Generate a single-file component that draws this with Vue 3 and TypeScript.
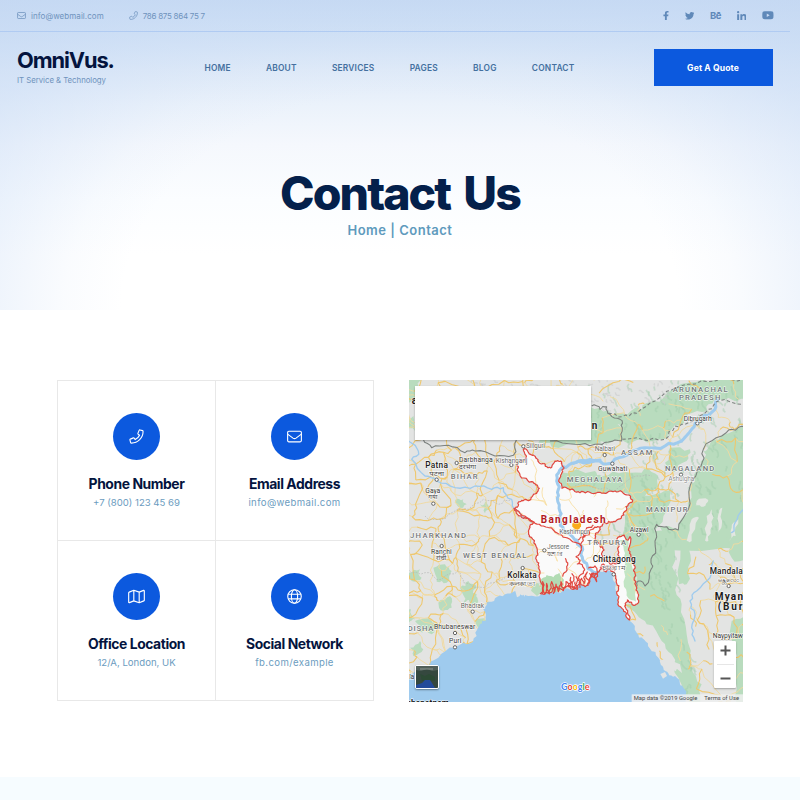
<script setup lang="ts">
type Pt = [number, number]

interface Label {
  t: string
  x: number
  y: number
  w: number
  c: string
}

const navItems = ['Home', 'About', 'Services', 'Pages', 'Blog', 'Contact']

const cards = [
  { icon: 'phone', title: 'Phone Number', text: '+7 (800) 123 45 69', link: false },
  { icon: 'mail', title: 'Email Address', text: 'info@webmail.com', link: true },
  { icon: 'map', title: 'Office Location', text: '12/A, London, UK', link: false },
  { icon: 'globe', title: 'Social Network', text: 'fb.com/example', link: true },
]

// Seeded generator, so the map lines are the same on every load
let seed = 20197
function rnd(): number {
  seed = (seed * 1664525 + 1013904223) % 4294967296
  return seed / 4294967296
}

function parse(s: string, dx = 0, dy = 0): Pt[] {
  return s.trim().split(/\s+/).map((p) => {
    const [x, y] = p.split(',').map(Number)
    return [x + dx, y + dy] as Pt
  })
}

// Midpoint displacement: turns a coarse outline into a natural looking one
function rough(pts: Pt[], amp: number, close = false, depth = 2): string {
  let line = close ? [...pts, pts[0]] : pts
  for (let d = 0; d < depth; d++) {
    const next: Pt[] = [line[0]]
    for (let i = 1; i < line.length; i++) {
      const [ax, ay] = line[i - 1]
      const [bx, by] = line[i]
      const len = Math.hypot(bx - ax, by - ay)
      const k = Math.min(len * 0.3, amp) * (rnd() - 0.5) * 2
      next.push([(ax + bx) / 2 - ((by - ay) / (len || 1)) * k, (ay + by) / 2 + ((bx - ax) / (len || 1)) * k])
      next.push(line[i])
    }
    line = next
  }
  return 'M' + line.map((p) => p[0].toFixed(1) + ' ' + p[1].toFixed(1)).join('L') + (close ? 'Z' : '')
}

const NW: Pt = [-12, -12]
const NE: Pt = [498, -12]
const SW: Pt = [-12, 483]
const SE: Pt = [498, 483]
const BD: Pt = [273, 180]
const at = (s: string, o: Pt) => parse(s, o[0], o[1])

const sea = rough(parse('-20,925 8,883 35,868 63,853 88,833 138,803 173,793 203,768 213,733 231,723 223,688 233,668 258,655 288,643 318,633 333,643 358,648 398,640 423,632 463,630 503,618 535,600 548,580 573,575 603,570 612,600 625,650 645,690 663,723 683,758 705,778 722,805 748,833 763,863 778,880 798,888 812,905 823,923 828,975 -20,975'), 6, true)

const greens = [
  at('100,118 140,112 200,100 235,75 290,42 330,22 400,18 520,5 520,70 440,72 400,85 380,108 330,125 290,160 270,188 200,190 145,195 142,160', NE),
  at('-10,60 45,92 100,103 140,155 140,195 60,205 -10,205 -110,200', NE),
  at('520,150 440,178 400,215 385,225 378,270 345,330 340,400 310,460 250,445 240,520 520,520', NE),
  at('-50,288 60,285 80,300 150,288 210,275 250,300 240,340 210,370 175,372 150,350 0,345 -60,340', NE),
  at('175,370 240,355 290,330 280,390 250,450 240,520 130,520 150,440', NE),
  at('285,215 345,220 335,255 290,290 270,260', NE),
  at('130,-20 300,-20 300,60 305,130 320,190 335,280 350,380 380,430 388,500 345,500 310,410 290,340 260,300 215,250 185,220 150,190 180,195 185,130 160,60', SE),
  at('305,-20 345,-10 348,60 335,130 312,130', SE),
  at('455,-20 520,-20 520,60 470,50', SE),
  at('470,240 520,220 520,500 490,500 480,380', SE),
  at('-10,-10 50,5 40,30 60,40 20,75 -10,80', NW),
  at('-5,125 25,120 30,165 -5,160', NW),
  at('400,190 520,190 520,208 440,212', NW),
  at('85,80 120,70 140,90 125,125 95,122', SW),
  at('165,140 190,120 215,140 200,180 175,185', SW),
  at('100,185 135,165 140,200 115,210', SW),
  at('30,240 70,232 100,250 80,280 40,270', SW),
  at('185,165 215,160 220,180 195,185', SW),
  at('215,235 243,238 235,255 220,260', SW),
  at('15,320 45,300 55,325 25,345', SW),
  at('10,95 45,85 50,110 20,120', SW),
  at('225,385 245,375 262,398 240,412', NW),
  at('0,215 18,205 30,235 12,245', SW),
  at('150,375 175,370 185,385 160,392', NW),
].map((p) => rough(p, 9, true))

// Bare valleys inside the eastern forest
const clearings = [
  at('365,375 400,372 385,392 362,388', NE),
  at('350,430 372,425 350,495 335,495', NE),
  at('470,455 490,430 482,480 462,495', NE),
  at('395,420 410,400 412,450 400,495 390,495', NE),
  at('430,415 442,395 440,450 430,470', NE),
].map((p) => rough(p, 6, true))

const hills: string[] = []
for (let i = 0; i < 420; i++) {
  const x = 520 + rnd() * 482
  const y = rnd() * 940
  const low = y > 470
  if (low && (x < 690 + (y - 500) * 0.35 || x > 800 + (y - 500) * 0.15)) continue
  if (!low && x < 700 && y > 200 && y < 270) continue
  const l = 8 + rnd() * 22
  hills.push(rough([[x, y], [x + l * (rnd() - 0.2), y + l]], 8))
}
const snow: string[] = []
for (let i = 0; i < 90; i++) {
  const x = 180 + rnd() * 600
  const y = rnd() * (x > 640 ? 65 : 85)
  snow.push(rough([[x, y], [x + 18 * rnd(), y + 12 * rnd()]], 6))
}

// Web of roads on a jittered grid, thinner over the eastern hills
function density(x: number, y: number): number {
  if (x > 880 && y > 480) return 0.55
  if (x > 820 && y > 480) return 0.4
  if (x > 660 && y > 400) return 0.07
  if (x > 800 && y > 200) return 0.14
  if (x > 520 && y < 110) return 0.1
  if (x > 520 && y < 420) return 0.62
  return 0.82
}
const minor: string[] = []
const major: string[] = []
const step = 43
const nodes: Pt[][] = []
for (let r = 0; r < 25; r++) {
  nodes.push([])
  for (let q = 0; q < 26; q++) nodes[r].push([q * step - 20 + (rnd() - 0.5) * 44, r * step - 20 + (rnd() - 0.5) * 44])
}
for (let r = 0; r < 24; r++) {
  for (let q = 0; q < 25; q++) {
    const a = nodes[r][q]
    const d = density(a[0], a[1])
    for (const b of [nodes[r][q + 1], nodes[r + 1][q]]) {
      if (rnd() < d) (rnd() < 0.6 ? major : minor).push(rough([a, b], 8))
    }
    if (rnd() < d * 0.4) minor.push(rough([a, nodes[r + 1][q + 1]], 8))
  }
}
const inner = [...minor, ...major].filter((_, n) => n % 3 === 0)

const country = rough(at('70,28 95,45 110,55 125,72 140,80 155,82 172,62 186,72 186,90 182,110 186,145 210,150 250,155 300,157 345,153 385,165 398,180 378,200 372,225 345,245 325,245 300,262 287,280 285,295 300,318 312,330 308,348 330,372 348,372 358,350 352,300 358,288 372,285 382,300 390,290 390,335 400,370 405,400 408,450 411,492 400,496 382,480 374,498 388,540 366,505 352,465 350,430 345,400 330,388 318,396 305,385 292,400 275,400 268,425 255,440 240,425 225,445 205,435 190,452 170,440 150,458 125,462 120,400 110,360 112,330 88,290 90,262 100,250 70,235 42,205 60,185 85,182 110,160 118,145 95,125 55,95 50,75 75,60', BD), 5, true, 3)
const hillTracts = rough(at('360,300 385,300 390,340 405,400 408,485 385,475 372,440 372,380 375,340', BD), 4, true)
const mangrove = rough(at('122,420 140,405 160,412 178,398 192,420 190,448 150,458 124,460', BD), 4, true)
const redLines = [
  rough(at('42,205 60,220 90,238 105,250 130,258 160,270 185,285 210,298 245,320', BD), 4),
  rough(at('245,320 248,295 262,285 270,270 290,262 300,262', BD), 6),
  rough(at('235,300 255,290 250,275 275,262 280,255', BD), 6),
  rough(at('245,320 240,340 228,350 240,360 232,372 248,380 250,400 238,420', BD), 7),
  rough(at('120,462 128,425 135,462 140,430 148,462 155,425 160,460 168,432 175,455 183,425 190,452', BD), 5),
  rough(at('190,452 198,425 205,440 212,412 222,446 228,410 240,442 245,415 252,432 262,396 266,432 276,402 290,425 292,402', BD), 7),
  rough(at('196,355 203,375 198,395 188,410', BD), 4),
  rough(at('215,400 222,420 210,440 232,448 225,425', BD), 5),
  rough(at('265,385 285,378 292,395 280,412 268,400', BD), 5),
  rough(at('300,385 310,372 322,388 335,378 345,392', BD), 6),
]
const rivers = [
  { d: rough(at('-10,170 40,225 20,250 60,300 95,315 150,335 210,330 260,340 295,335 320,370 325,395 350,420 380,438', NW), 6), w: 4 },
  { d: rough(at('-5,262 60,255 110,262 160,235 210,215 270,210 320,195 350,160 380,130 420,100 430,70', NE), 6), w: 9 },
  { d: rough(at('300,60 260,62 215,70 190,80 170,105 178,140 172,175 180,215 178,240 190,270 225,300 245,320', BD), 4), w: 9 },
  { d: rough(at('230,300 246,320 247,352 262,378 285,398 300,402', BD), 4), w: 9 },
  { d: rough(at('415,60 405,110 365,150 345,180 360,220 350,260 360,300', SE), 7), w: 4 },
  { d: rough(at('505,400 480,440 470,470', NE), 6), w: 4 },
]
const borders = [
  rough(at('55,190 80,215 130,208 180,230 210,225 270,240 325,238 335,190', NW), 6),
  rough(at('50,90 75,100 95,92 105,115 135,130 142,155 140,195 100,198 60,205 0,205 -75,195', NE), 6),
  rough(at('510,152 470,160 440,180 385,220 378,270 345,330 340,400 310,462 275,452 245,445 240,495 242,520 228,560 228,580 210,630 190,615 185,632', NE), 6),
]
const dashed = [
  rough(at('100,112 140,122 185,112 240,75 290,42 340,25 420,15 510,8', NE), 6),
  rough(at('142,190 200,190 270,190 300,150 340,140 400,100 430,75 505,85', NE), 6),
]
const stateLines = [
  rough(at('60,420 110,430 150,405 190,400 235,370 280,385 320,370', NW), 7),
  rough(at('10,85 60,95 110,115 160,90 175,125 240,140 300,110', SW), 7),
  rough(at('0,330 60,335 120,345 170,305 230,300', NE), 7),
]

const labels: Label[] = [
  { t: 'a', x: 8, y: 72, w: 14, c: 'nation' },
  { t: 'n', x: 548, y: 148, w: 17, c: 'nation' },
  { t: 'Patna', x: 49, y: 264, w: 68, c: 'city' },
  { t: 'पटना', x: 61, y: 287, w: 44, c: 'local' },
  { t: 'Darbhanga', x: 150, y: 247, w: 101, c: 'town' },
  { t: 'दरभंगा', x: 150, y: 266, w: 51, c: 'local' },
  { t: 'Kishanganj', x: 260, y: 248, w: 95, c: 'town faint' },
  { t: 'Siliguri', x: 351, y: 205, w: 57, c: 'town faint' },
  { t: 'BIHAR', x: 125, y: 296, w: 81, c: 'state' },
  { t: 'Gaya', x: 49, y: 338, w: 45, c: 'town' },
  { t: 'गया', x: 58, y: 358, w: 27, c: 'local' },
  { t: 'JHARKHAND', x: 3, y: 473, w: 168, c: 'state' },
  { t: 'ARUNACHAL', x: 791, y: 36, w: 165, c: 'state' },
  { t: 'PRADESH', x: 810, y: 59, w: 124, c: 'state' },
  { t: 'Dibrugarh', x: 824, y: 122, w: 84, c: 'town' },
  { t: 'Nalbari', x: 557, y: 212, w: 61, c: 'town faint' },
  { t: 'ASSAM', x: 636, y: 226, w: 94, c: 'state' },
  { t: 'Guwahati', x: 567, y: 274, w: 88, c: 'town' },
  { t: 'NAGALAND', x: 768, y: 272, w: 148, c: 'state' },
  { t: 'Ashuigha', x: 778, y: 304, w: 78, c: 'town pale' },
  { t: 'MEGHALAYA', x: 473, y: 307, w: 167, c: 'state' },
  { t: 'MANIPUR', x: 711, y: 395, w: 125, c: 'state' },
  { t: 'Aizawl', x: 662, y: 455, w: 57, c: 'town' },
  { t: 'Kashimpur', x: 451, y: 463, w: 90, c: 'town faint' },
  { t: 'Bangladesh', x: 395, y: 430, w: 195, c: 'focus' },
  { t: 'TRIPURA', x: 535, y: 496, w: 116, c: 'state' },
  { t: 'Jessore', x: 414, y: 508, w: 66, c: 'town faint' },
  { t: 'যশোর', x: 414, y: 528, w: 45, c: 'local' },
  { t: 'Chittagong', x: 551, y: 546, w: 129, c: 'city' },
  { t: 'চট্টগ্রাম', x: 578, y: 569, w: 71, c: 'local' },
  { t: 'Kolkata', x: 295, y: 593, w: 88, c: 'city' },
  { t: 'কলকাতা', x: 300, y: 617, w: 81, c: 'local' },
  { t: 'Ranchi', x: 66, y: 522, w: 62, c: 'town' },
  { t: 'रांची', x: 81, y: 541, w: 31, c: 'local' },
  { t: 'WEST BENGAL', x: 162, y: 533, w: 190, c: 'state' },
  { t: 'Bhadrak', x: 155, y: 685, w: 71, c: 'town faint' },
  { t: 'DISHA', x: -4, y: 753, w: 77, c: 'state' },
  { t: 'Bhubaneswar', x: 75, y: 748, w: 124, c: 'town' },
  { t: 'Puri', x: 120, y: 790, w: 37, c: 'town' },
  { t: 'la', x: 1, y: 897, w: 15, c: 'town' },
  { t: 'khapatnam', x: -8, y: 978, w: 128, c: 'city heavy' },
  { t: 'Mandala', x: 902, y: 581, w: 99, c: 'city' },
  { t: 'မန္တလေး', x: 926, y: 605, w: 66, c: 'local' },
  { t: 'Myan', x: 917, y: 660, w: 85, c: 'nation' },
  { t: '(Bur', x: 926, y: 690, w: 74, c: 'nation' },
  { t: 'Naypyitaw', x: 911, y: 774, w: 91, c: 'town' },
]

const markers = parse('83,299 143,249 307,255 343,199 73,371 865,130 587,225 610,251 816,284 689,464 406,511 614,583 341,564 98,498 191,695 138,759 138,802 959,618')
</script>

<template>
  <div class="page">
    <header class="hero">
      <div class="topbar">
        <div class="contacts">
          <span class="contact">
            <svg class="tiny" viewBox="0 0 24 24"><rect x="1.500" y="4" width="21" height="16" rx="2" /><path d="M1.500 8.500l8.300 6.200q2.200 1.500 4.400 0l8.300-6.200" /></svg>
            <span class="mailtext">info@webmail.com</span>
          </span>
          <span class="contact">
            <svg class="tiny" viewBox="0 0 24 24"><path d="M17.500 1.500L21.800 2.600Q22.500 2.800 22.500 4C22.500 14.200 14.200 22.500 4 22.500Q2.800 22.500 2.600 21.800L1.500 17.500Q1.300 16.600 2.200 16.200L7 14.200Q7.700 13.900 8.300 14.600L10 16.900C13 15.500 15.500 13 16.900 10L14.600 8.300Q13.900 7.700 14.200 7L16.200 2.200Q16.600 1.300 17.500 1.500Z" /></svg>
            <span class="phonetext">786 875 864 75 7</span>
          </span>
        </div>
        <div class="social">
          <svg viewBox="0 0 320 512"><path d="M279.140 288l14.220-92.660h-88.910v-60.130c0-25.350 12.420-50.060 52.240-50.060h40.420V6.260S260.430 0 225.360 0c-73.220 0-121.080 44.380-121.080 124.720v70.620H22.890V288h81.390v224h100.170V288z" /></svg>
          <svg viewBox="0 0 512 512"><path d="M459.370 151.716c.325 4.548.325 9.097.325 13.645 0 138.720-105.583 298.558-298.558 298.558-59.452 0-114.680-17.219-161.137-47.106 8.447.974 16.568 1.299 25.340 1.299 49.055 0 94.213-16.568 130.274-44.832-46.132-.975-84.792-31.188-98.112-72.772 6.498.974 12.995 1.624 19.818 1.624 9.421 0 18.843-1.300 27.614-3.573-48.081-9.747-84.143-51.980-84.143-102.985v-1.299c13.969 7.797 30.214 12.670 47.431 13.319-28.264-18.843-46.781-51.005-46.781-87.391 0-19.492 5.197-37.360 14.294-52.954 51.655 63.675 129.300 105.258 216.365 109.807-1.624-7.797-2.599-15.918-2.599-24.040 0-57.828 46.782-104.934 104.934-104.934 30.213 0 57.502 12.670 76.670 33.137 23.715-4.548 46.456-13.320 66.599-25.340-7.798 24.366-24.366 44.833-46.132 57.827 21.117-2.273 41.584-8.122 60.426-16.243-14.292 20.791-32.161 39.308-52.628 54.253z" /></svg>
          <span class="behance">Bē</span>
          <svg viewBox="0 0 448 448"><path d="M100.280 448H7.400V148.900h92.880zM53.790 108.100C24.090 108.100 0 83.500 0 53.800a53.790 53.790 0 0 1 107.580 0c0 29.700-24.100 54.300-53.790 54.300zM447.900 448h-92.680V302.400c0-34.700-.7-79.200-48.290-79.200-48.290 0-55.690 37.700-55.690 76.700V448h-92.780V148.900h89.080v40.800h1.300c12.400-23.500 42.690-48.300 87.880-48.300 94 0 111.280 61.900 111.280 142.300V448z" /></svg>
          <svg class="youtube" viewBox="0 0 576 512"><path d="M549.655 124.083c-6.281-23.650-24.787-42.276-48.284-48.597C458.781 64 288 64 288 64S117.220 64 74.629 75.486c-23.497 6.322-42.003 24.947-48.284 48.597-11.412 42.867-11.412 132.305-11.412 132.305s0 89.438 11.412 132.305c6.281 23.650 24.787 41.500 48.284 47.821C117.220 448 288 448 288 448s170.780 0 213.371-11.486c23.497-6.321 42.003-24.171 48.284-47.821 11.412-42.867 11.412-132.305 11.412-132.305s0-89.438-11.412-132.305zm-317.510 213.508V175.185l142.739 81.205-142.739 81.201z" /></svg>
        </div>
      </div>

      <div class="navbar">
        <div class="brand">
          <div class="logo">OmniVus.</div>
          <div class="tagline">IT Service &amp; Technology</div>
        </div>
        <nav class="nav">
          <a v-for="item in navItems" :key="item">{{ item }}</a>
        </nav>
        <button class="quote">Get A Quote</button>
      </div>

      <h1 class="title">Contact Us</h1>
      <p class="crumbs">Home | Contact</p>
    </header>

    <main class="main">
      <section class="cards">
        <article v-for="card in cards" :key="card.title" class="card">
          <div class="disc">
            <svg v-if="card.icon === 'phone'" class="glyph" viewBox="0 0 24 24"><path d="M17.500 1.500L21.800 2.600Q22.500 2.800 22.500 4C22.500 14.200 14.200 22.500 4 22.500Q2.800 22.500 2.600 21.800L1.500 17.500Q1.300 16.600 2.200 16.200L7 14.200Q7.700 13.900 8.300 14.600L10 16.900C13 15.500 15.500 13 16.900 10L14.600 8.300Q13.900 7.700 14.200 7L16.200 2.200Q16.600 1.300 17.500 1.500Z" /></svg>
            <svg v-else-if="card.icon === 'mail'" class="glyph" viewBox="0 0 24 24"><rect x="1" y="3.500" width="22" height="17" rx="2" /><path d="M1 8.200l8.600 6.400q2.400 1.700 4.800 0l8.600-6.400" /></svg>
            <svg v-else-if="card.icon === 'map'" class="glyph wide" viewBox="0 0 27 24"><path d="M1 6.200q0-.9.800-1.200L9.200 2l8.600 3 7-2.800q1.200-.4 1.200.8v14.800q0 .9-.8 1.200L17.800 22l-8.600-3-7 2.800Q1 22.200 1 21zM9.200 2v17M17.800 5v17" /></svg>
            <svg v-else class="glyph" viewBox="0 0 24 24"><circle cx="12" cy="12" r="10.800" /><ellipse cx="12" cy="12" rx="5" ry="10.800" /><path d="M2 8.300h20M2 15.700h20" /></svg>
          </div>
          <h2>{{ card.title }}</h2>
          <p :class="{ link: card.link }">{{ card.text }}</p>
        </article>
      </section>

      <section class="map">
        <svg class="mapart" viewBox="0 0 1002 966">
          <clipPath id="bd"><path :d="country" /></clipPath>
          <rect width="1002" height="966" fill="#e3e4e3" />
          <path v-for="(d, i) in greens" :key="'g' + i" :d="d" fill="#b9dcbe" />
          <path v-for="(d, i) in hills" :key="'h' + i" :d="d" class="hill" />
          <path v-for="(d, i) in snow" :key="'s' + i" :d="d" class="snow" />
          <path v-for="(d, i) in clearings" :key="'e' + i" :d="d" fill="#e3e7e2" />
          <path v-for="(d, i) in minor" :key="'m' + i" :d="d" class="minor" />
          <path v-for="(d, i) in major" :key="'j' + i" :d="d" class="major" />
          <path v-for="(d, i) in stateLines" :key="'t' + i" :d="d" class="stateline" />
          <path :d="sea" fill="#9fcbee" />
          <path class="isle" d="M700 775l25 -12l22 10l-8 22l20 18l12 -4l18 34l24 10l6 26l-22 -18l-20 -20l-18 -30l-22 4l-16 -26zM752 842l22 -8l14 16l18 12l-6 12l-22 -12l-22 -6zM754 882l14 -6l6 12l-12 8zM318 630l6 22l8 -4l6 -18l8 20l10 -22z" />
          <path class="mouth" d="M366 632l8 -18l14 -6l10 28l-14 12z" />
          <path :d="country" class="country" />
          <path :d="hillTracts" fill="#c2e5c4" />
          <path :d="mangrove" fill="#b2dcb4" />
          <g class="inner" clip-path="url(#bd)">
            <path v-for="(d, i) in inner" :key="'i' + i" :d="d" />
          </g>
          <path v-for="(r, i) in rivers" :key="'r' + i" :d="r.d" class="river" :stroke-width="r.w" />
          <path v-for="(d, i) in borders" :key="'b' + i" :d="d" class="border" />
          <path v-for="(d, i) in dashed" :key="'d' + i" :d="d" class="border dash" />
          <path :d="country" class="outline" />
          <path v-for="(d, i) in redLines" :key="'l' + i" :d="d" class="outline" />
          <circle v-for="(m, i) in markers" :key="'c' + i" :cx="m[0]" :cy="m[1]" r="5" class="marker" />
          <path d="M503 456l-13-17q-3-13 13-15q16 2 13 15z" fill="#f9ab1c" />
          <text
            v-for="(l, i) in labels"
            :key="'x' + i"
            :x="l.x"
            :y="l.y"
            :textLength="l.w"
            :lengthAdjust="l.c === 'local' ? 'spacingAndGlyphs' : 'spacing'"
            :class="l.c"
          >{{ l.t }}</text>
          <text class="brandmark" x="456" y="930" textLength="86" lengthAdjust="spacingAndGlyphs"><tspan fill="#4285f4">G</tspan><tspan fill="#ea4335">o</tspan><tspan fill="#fbbc05">o</tspan><tspan fill="#4285f4">g</tspan><tspan fill="#34a853">l</tspan><tspan fill="#ea4335">e</tspan></text>
          <rect x="668" y="943" width="334" height="23" fill="#eef0f0" fill-opacity=".85" />
          <text class="legal" x="674" y="960" textLength="191" lengthAdjust="spacing">Map data ©2019 Google</text>
          <text class="legal" x="886" y="960" textLength="104" lengthAdjust="spacing">Terms of Use</text>
        </svg>
        <div class="infobox"></div>
        <svg class="thumb" viewBox="0 0 22 22"><rect width="22" height="22" fill="#35483f" /><path d="M0 0h22v4l-6 1-5-2-6 2-5-1z" fill="#52605a" /><path d="M4 8l5 2 4-2 6 3v4l-7-1-6 1z" fill="#2c4a35" /><path d="M0 19l6-2 3-3h5l2 3 3 5H0z" fill="#234a9a" /><path d="M4 3h13" stroke="#aab2ad" stroke-width=".7" /></svg>
        <div class="zoom">
          <svg viewBox="0 0 11 11"><path d="M5.500 .5v10M.5 5.500h10" /></svg>
          <i></i>
          <svg viewBox="0 0 11 11"><path d="M.5 5.500h10" /></svg>
        </div>
      </section>
    </main>
    <div class="strip"></div>
  </div>
</template>

<style>
body {
  margin: 0;
  background: #fff;
}
</style>

<style scoped>
.page {
  width: 800px;
  height: 800px;
  overflow: hidden;
  display: flex;
  flex-direction: column;
  font-family: Inter, 'Liberation Sans', sans-serif;
  background: #fff;
}
.hero {
  height: 310px;
  flex: none;
  display: flex;
  flex-direction: column;
  background:
    radial-gradient(ellipse 60% 120% at 50% 100%, rgba(205, 222, 246, 0) 58%, rgba(205, 222, 246, 0.1) 70%, rgba(203, 221, 246, 0.32) 85%, rgba(200, 219, 245, 0.5) 100%, rgba(198, 217, 243, 0.6) 120%),
    linear-gradient(180deg, #c4d8f2 0, #cfe0f5 32px, #dfeaf8 70px, #ebf2fb 105px, #f5f8fd 145px, #fbfdff 200px, #fff 255px);
}
.topbar {
  height: 32px;
  flex: none;
  margin-right: 10px;
  padding: 0 17px;
  display: flex;
  justify-content: space-between;
  align-items: center;
  border-bottom: 1px solid #b0cbf2;
  box-sizing: border-box;
  color: #6f93bd;
  font-size: 8px;
}
.contacts {
  display: flex;
  gap: 25px;
}
.contact {
  display: flex;
  align-items: center;
  gap: 5px;
}
.mailtext {
  letter-spacing: 0.050px;
}
.phonetext {
  letter-spacing: -0.280px;
}
.tiny {
  width: 9px;
  height: 9px;
  fill: none;
  stroke: currentColor;
  stroke-width: 2;
  stroke-linejoin: round;
}
.social {
  display: flex;
  align-items: center;
  justify-content: space-between;
  width: 110px;
  color: #6089b9;
}
.social svg {
  height: 9.500px;
  fill: currentColor;
}
.social svg.youtube {
  height: 10.500px;
  margin-right: -1px;
}
.behance {
  font-size: 9.500px;
  line-height: 10px;
  font-weight: 700;
  letter-spacing: -0.300px;
}
.navbar {
  height: 71px;
  flex: none;
  padding: 0 27.500px 0 17px;
  display: flex;
  align-items: center;
}
.brand {
  width: 187.500px;
  flex: none;
  padding-bottom: 3px;
}
.logo {
  font-size: 21.800px;
  line-height: 26px;
  font-weight: 700;
  letter-spacing: -1.100px;
  color: #04143e;
}
.tagline {
  margin-top: 1px;
  font-size: 7.800px;
  line-height: 12px;
  letter-spacing: -0.030px;
  color: #6f93bd;
  white-space: nowrap;
}
.nav {
  flex: 1;
  display: flex;
  gap: 35.200px;
  font-size: 8.400px;
  font-weight: 600;
  letter-spacing: 0.200px;
  color: #44709f;
}
.nav a {
  text-transform: uppercase;
}
.quote {
  width: 119px;
  height: 37.500px;
  padding: 0;
  border: 0;
  background: #0c59de;
  color: #fff;
  font: 700 8.600px Inter, sans-serif;
  letter-spacing: 0.100px;
}
.title {
  margin: 62px 0 0;
  text-align: center;
  font-size: 46.500px;
  line-height: 56px;
  font-weight: 800;
  letter-spacing: -1.950px;
  word-spacing: 5px;
  color: #04204b;
}
.crumbs {
  margin: 0;
  text-align: center;
  font-size: 13px;
  line-height: 18px;
  font-weight: 600;
  letter-spacing: 0.500px;
  color: #5e9abd;
}
.main {
  height: 467px;
  flex: none;
  display: flex;
  align-items: flex-start;
  gap: 35px;
  padding: 70px 0 0 57px;
  box-sizing: border-box;
}
.cards {
  width: 317px;
  height: 321px;
  box-sizing: border-box;
  display: grid;
  grid-template-columns: 157px 157px;
  grid-template-rows: 159px 159px;
  gap: 1px;
  padding: 1px;
  background: #e8e8e8;
}
.card {
  background: #fff;
  display: flex;
  flex-direction: column;
  align-items: center;
  padding-top: 32px;
  box-sizing: border-box;
}
.disc {
  width: 47px;
  height: 47px;
  flex: none;
  border-radius: 50%;
  background: #0c59de;
  display: flex;
  align-items: center;
  justify-content: center;
}
.glyph {
  width: 15px;
  height: 15px;
  fill: none;
  stroke: #fff;
  stroke-width: 1.800;
  stroke-linejoin: round;
}
.glyph.wide {
  width: 17px;
}
.card h2 {
  margin: 15.500px 0 0;
  font-size: 13.900px;
  line-height: 17px;
  font-weight: 700;
  letter-spacing: -0.430px;
  color: #04143e;
}
.card p {
  margin: 1px 0 0;
  font-size: 9.600px;
  line-height: 17px;
  color: #6c9cc0;
}
.card p.link {
  letter-spacing: 0.370px;
}
.map {
  position: relative;
  width: 334px;
  height: 322px;
  overflow: hidden;
}
.mapart {
  display: block;
  width: 334px;
  height: 322px;
  font-family: Roboto, 'Noto Sans', sans-serif;
}
.mapart path {
  stroke-linejoin: round;
}
.hill,
.snow,
.minor,
.major,
.stateline,
.river,
.border,
.outline,
.inner {
  fill: none;
}
.hill {
  stroke: #9fcbaa;
  stroke-width: 5;
  opacity: 0.45;
}
.snow {
  stroke: #c9cccc;
  stroke-width: 4;
  opacity: 0.6;
}
.minor {
  stroke: #f0d9a0;
  stroke-width: 2.800;
}
.major {
  stroke: #efc76c;
  stroke-width: 3.200;
}
.inner {
  stroke: #f8dfa2;
  stroke-width: 2.600;
}
.stateline {
  stroke: #b5b5b5;
  stroke-width: 2;
  stroke-dasharray: 5 4;
}
.isle {
  fill: #e3e4e3;
}
.mouth {
  fill: #b9dcbe;
}
.country {
  fill: #fafafa;
}
.outline {
  stroke: #e0473f;
  stroke-width: 3.600;
}
.river {
  stroke: #9fcbee;
  stroke-linecap: round;
}
.border {
  stroke: #7d827f;
  stroke-width: 3.200;
}
.border.dash {
  stroke-dasharray: 10 7;
}
.marker {
  fill: #fff;
  stroke: #5c5c5c;
  stroke-width: 2.800;
}
.mapart text {
  paint-order: stroke;
  stroke: rgba(255, 255, 255, 0.7);
  stroke-width: 4;
  stroke-linejoin: round;
}
.city {
  font-size: 25px;
  font-weight: 500;
  fill: #1c1c1c;
}
.heavy {
  font-weight: 700;
}
.town {
  font-size: 20.500px;
  fill: #3c3c3c;
}
.faint {
  fill: #6c6c6c;
}
.pale {
  fill: #929292;
}
.local {
  font-size: 19px;
  fill: #4c4c4c;
}
.state {
  font-size: 23px;
  font-weight: 500;
  fill: #75787b;
}
.nation {
  font-size: 30px;
  font-weight: 700;
  fill: #1c1c1c;
}
.focus {
  font-size: 30px;
  font-weight: 700;
  fill: #b3191c;
}
.mapart .brandmark {
  font-family: Lato, sans-serif;
  font-size: 27px;
  font-weight: 700;
  stroke: #fff;
}
.mapart .legal {
  font-size: 17.500px;
  fill: #444;
  stroke: none;
}
.infobox {
  position: absolute;
  left: 6px;
  top: 6px;
  width: 176px;
  height: 54px;
  background: #fff;
  box-shadow: 0 1px 2px rgba(0, 0, 0, 0.3);
}
.thumb {
  position: absolute;
  left: 6px;
  top: 285px;
  width: 22px;
  height: 22px;
  border: 1.500px solid #fff;
  border-radius: 2px;
  box-shadow: 0 1px 2px rgba(0, 0, 0, 0.4);
}
.zoom {
  position: absolute;
  left: 305px;
  top: 261px;
  width: 22px;
  height: 47px;
  display: flex;
  flex-direction: column;
  align-items: center;
  justify-content: space-around;
  background: #fff;
  border-radius: 1px;
  box-shadow: 0 1px 2px rgba(0, 0, 0, 0.3);
}
.zoom svg {
  width: 11px;
  height: 11px;
  stroke: #555;
  stroke-width: 2;
}
.zoom i {
  width: 17px;
  height: 1px;
  background: #e6e6e6;
}
.strip {
  flex: 1;
  background: #f6fcff;
}
</style>
